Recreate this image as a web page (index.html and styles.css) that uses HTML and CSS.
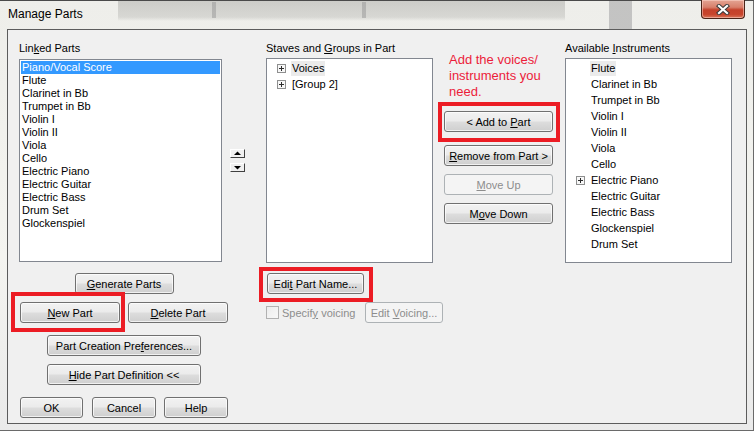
FILE: index.html
```html
<!DOCTYPE html>
<html lang="en">
<head>
  <meta charset="UTF-8" />
  <title>Manage Parts</title>
  <link rel="stylesheet" href="styles.css" />
</head>
<body>

<div class="window">
  <!-- title bar -->
  <div class="titlebar">
    <span class="title">Manage Parts</span>
    <div class="close-btn">
      <svg width="14" height="11" viewBox="0 0 14 11">
        <path d="M3 2 L11 9 M11 2 L3 9" stroke="#3a3a3a" stroke-width="4.2" stroke-linecap="square" fill="none"/>
        <path d="M3 2 L11 9 M11 2 L3 9" stroke="#ffffff" stroke-width="2.2" stroke-linecap="square" fill="none"/>
      </svg>
    </div>
  </div>

  <!-- dialog body -->
  <div class="client">

    <!-- linked parts -->
    <div class="col col-linked">
      <div class="label">Lin<u>k</u>ed Parts</div>
      <div class="list-row">
        <div class="listbox linked-list">
          <div class="list-item selected">Piano/Vocal Score</div>
          <div class="list-item">Flute</div>
          <div class="list-item">Clarinet in Bb</div>
          <div class="list-item">Trumpet in Bb</div>
          <div class="list-item">Violin I</div>
          <div class="list-item">Violin II</div>
          <div class="list-item">Viola</div>
          <div class="list-item">Cello</div>
          <div class="list-item">Electric Piano</div>
          <div class="list-item">Electric Guitar</div>
          <div class="list-item">Electric Bass</div>
          <div class="list-item">Drum Set</div>
          <div class="list-item">Glockenspiel</div>
        </div>
        <div class="spin">
          <div class="spin-btn">
            <svg width="13" height="7" viewBox="0 0 13 7"><polygon points="3,5 10,5 6.5,1.5" fill="#000"/></svg>
          </div>
          <div class="spin-btn">
            <svg width="13" height="7" viewBox="0 0 13 7"><polygon points="3,2 10,2 6.5,5.5" fill="#000"/></svg>
          </div>
        </div>
      </div>

      <div class="left-buttons">
        <button class="btn w-generate"><u>G</u>enerate Parts</button>
        <div class="btn-pair">
          <span class="marked mark-new"><button class="btn w-part"><u>N</u>ew Part</button></span>
          <button class="btn w-part"><u>D</u>elete Part</button>
        </div>
        <button class="btn w-wide gap-12">Part Creation Pre<u>f</u>erences...</button>
        <button class="btn w-wide gap-8"><u>H</u>ide Part Definition &lt;&lt;</button>
        <div class="dialog-buttons">
          <button class="btn w-ok">OK</button>
          <button class="btn w-cancel">Cancel</button>
          <button class="btn w-cancel">Help</button>
        </div>
      </div>
    </div>

    <!-- staves and groups -->
    <div class="col col-staves">
      <div class="label label-tree">Staves and <u>G</u>roups in Part</div>
      <div class="listbox treebox">
        <div class="tree-row">
          <span class="expander">
            <svg width="9" height="9" viewBox="0 0 9 9"><rect x="0.5" y="0.5" width="8" height="8" fill="#f7f7f7" stroke="#8e8f8f"/><path d="M2 4.5 H7 M4.5 2 V7" stroke="#2c2c2c"/></svg>
          </span>
          <span class="tree-text hover">Voices</span>
        </div>
        <div class="tree-row">
          <span class="expander">
            <svg width="9" height="9" viewBox="0 0 9 9"><rect x="0.5" y="0.5" width="8" height="8" fill="#f7f7f7" stroke="#8e8f8f"/><path d="M2 4.5 H7 M4.5 2 V7" stroke="#2c2c2c"/></svg>
          </span>
          <span class="tree-text">[Group 2]</span>
        </div>
      </div>

      <span class="marked mark-edit"><button class="btn w-edit">Edi<u>t</u> Part Name...</button></span>

      <div class="voicing-row">
        <span class="checkbox"></span>
        <span class="check-label">Specif<u>y</u> voicing</span>
        <button class="btn w-voicing" disabled>Edit <u>V</u>oicing...</button>
      </div>
    </div>

    <!-- add / remove -->
    <div class="col col-actions">
      <div class="hint">Add the voices/<br>instruments you<br>need.</div>
      <span class="marked mark-add"><button class="btn w-action">&lt; Add to <u>P</u>art</button></span>
      <button class="btn w-action gap-13"><u>R</u>emove from Part &gt;</button>
      <button class="btn w-action gap-8" disabled><u>M</u>ove Up</button>
      <button class="btn w-action gap-8">M<u>o</u>ve Down</button>
    </div>

    <!-- available instruments -->
    <div class="col col-avail">
      <div class="label label-tree">Available <u>I</u>nstruments</div>
      <div class="listbox treebox">
        <div class="tree-row"><span class="expander empty"></span><span class="tree-text hover">Flute</span></div>
        <div class="tree-row"><span class="expander empty"></span><span class="tree-text">Clarinet in Bb</span></div>
        <div class="tree-row"><span class="expander empty"></span><span class="tree-text">Trumpet in Bb</span></div>
        <div class="tree-row"><span class="expander empty"></span><span class="tree-text">Violin I</span></div>
        <div class="tree-row"><span class="expander empty"></span><span class="tree-text">Violin II</span></div>
        <div class="tree-row"><span class="expander empty"></span><span class="tree-text">Viola</span></div>
        <div class="tree-row"><span class="expander empty"></span><span class="tree-text">Cello</span></div>
        <div class="tree-row">
          <span class="expander">
            <svg width="9" height="9" viewBox="0 0 9 9"><rect x="0.5" y="0.5" width="8" height="8" fill="#f7f7f7" stroke="#8e8f8f"/><path d="M2 4.5 H7 M4.5 2 V7" stroke="#2c2c2c"/></svg>
          </span>
          <span class="tree-text">Electric Piano</span>
        </div>
        <div class="tree-row"><span class="expander empty"></span><span class="tree-text">Electric Guitar</span></div>
        <div class="tree-row"><span class="expander empty"></span><span class="tree-text">Electric Bass</span></div>
        <div class="tree-row"><span class="expander empty"></span><span class="tree-text">Glockenspiel</span></div>
        <div class="tree-row"><span class="expander empty"></span><span class="tree-text">Drum Set</span></div>
      </div>
    </div>

  </div>
</div>

</body>
</html>
```

FILE: styles.css
```css
* {
  margin: 0;
  padding: 0;
  box-sizing: border-box;
}

body {
  width: 754px;
  height: 431px;
  overflow: hidden;
  font-family: "Liberation Sans", Arial, sans-serif;
  font-size: 11px;
  color: #000;
  background: #eeeeea;
}

u {
  text-decoration: underline;
  text-underline-offset: 1px;
}

/* Window frame (glass with blurred windows behind) */
.window {
  width: 754px;
  height: 431px;
  display: flex;
  flex-direction: column;
  padding: 0 7px 7px;
  box-shadow: inset 0 1px #4a4a4a, inset -1px -1px #6a6a6a;
  background:
    linear-gradient(to right, rgba(150, 150, 150, 0.5), rgba(150, 150, 150, 0.5)) 212px 2px / 4px 16px no-repeat,
    linear-gradient(to right, rgba(150, 150, 150, 0.5), rgba(150, 150, 150, 0.5)) 362px 2px / 4px 16px no-repeat,
    linear-gradient(rgba(190, 190, 186, 0.7), rgba(200, 200, 196, 0.6) 80%, rgba(230, 230, 226, 0)) 118px 1px / 447px 20px no-repeat,
    linear-gradient(rgba(185, 185, 185, 0.8), rgba(185, 185, 185, 0.8)) 609px 1px / 23px 28px no-repeat,
    linear-gradient(#eeeeea, #f4f4f0 60%, #eaeaea);
}

.titlebar {
  height: 29px;
  flex-shrink: 0;
  display: flex;
  justify-content: space-between;
  align-items: flex-start;
}

.title {
  font-size: 12px;
  line-height: 14px;
  margin: 7px 0 0 1px;
  color: #000;
}

.close-btn {
  width: 44px;
  height: 19px;
  margin-right: 2px;
  display: flex;
  align-items: center;
  justify-content: center;
  border: 1px solid #4a2418;
  border-top: none;
  border-radius: 0 0 4px 4px;
  background: linear-gradient(#e4a493 0%, #d8806c 40%, #c4412a 55%, #c8452c 80%, #d9765a 100%);
  box-shadow: inset 0 0 0 1px rgba(255, 220, 210, 0.5);
}

/* Dialog body */
.client {
  flex: 1;
  display: flex;
  align-items: flex-start;
  padding: 12px 0 0 11px;
  border: 1px solid #5c5c5c;
  background: #f0f0f0;
}

.col {
  display: flex;
  flex-direction: column;
  flex-shrink: 0;
}

.label {
  line-height: 13px;
  margin-bottom: 4px;
  white-space: nowrap;
}

.label-tree {
  margin-bottom: 3px;
}

.listbox {
  background: #fff;
  border: 1px solid #828790;
}

/* Linked parts */
.col-linked {
  width: 226px;
}

.list-row {
  display: flex;
  align-items: center;
}

.linked-list {
  width: 203px;
  height: 203px;
  padding: 1px;
}

.list-item {
  height: 13px;
  line-height: 13px;
  padding-left: 1px;
  white-space: nowrap;
}

.list-item.selected {
  background: #3399ff;
  color: #fff;
}

.spin {
  margin-left: 8px;
  display: flex;
  flex-direction: column;
  gap: 5px;
}

.spin-btn {
  width: 15px;
  height: 9px;
  display: flex;
  background: #f0f0f0;
  border: 1px solid;
  border-color: #ffffff #404040 #404040 #ffffff;
}

.spin-btn svg {
  display: block;
}

.left-buttons {
  width: 208px;
  margin: 11px 0 0 1px;
  display: flex;
  flex-direction: column;
  align-items: center;
}

.btn-pair {
  display: flex;
  gap: 8px;
  margin-top: 8px;
  align-self: stretch;
}

.dialog-buttons {
  display: flex;
  margin-top: 12px;
  align-self: stretch;
  gap: 8px;
}

.dialog-buttons .w-ok {
  margin-right: 1px;
}

/* Buttons */
.btn {
  height: 21px;
  font-family: inherit;
  font-size: 11px;
  color: #000;
  border: 1px solid #707070;
  border-radius: 3px;
  background: linear-gradient(#f2f2f2 0%, #ebebeb 48%, #dddddd 52%, #cfcfcf 100%);
  box-shadow: inset 0 0 0 1px rgba(255, 255, 255, 0.7);
  white-space: nowrap;
  flex-shrink: 0;
}

.btn:disabled {
  color: #8d8d8d;
  border-color: #adb2b5;
  background: #f4f4f4;
  box-shadow: none;
}

.w-generate { width: 99px; }
.w-part     { width: 100px; }
.w-wide     { width: 154px; }
.w-ok       { width: 63px; }
.w-cancel   { width: 64px; }
.w-edit     { width: 97px; }
.w-voicing  { width: 78px; margin-left: auto; }
.w-action   { width: 109px; }

.gap-8  { margin-top: 8px; }
.gap-12 { margin-top: 12px; }
.gap-13 { margin-top: 13px; }

/* red annotation boxes */
.marked {
  position: relative;
  display: inline-flex;
  align-self: flex-start;
}

.marked::after {
  content: "";
  position: absolute;
  border: 4px solid #ec1c24;
  pointer-events: none;
}

.mark-new::after  { inset: -10px -5px -9px -9px; }
.mark-add::after  { inset: -9px -7px -10px -6px; }
.mark-edit::after { inset: -6px -9px -8px -8px; }

/* Staves and groups */
.col-staves {
  width: 167px;
  margin-left: 21px;
}

.treebox {
  width: 167px;
  height: 205px;
  padding-top: 1px;
}

.tree-row {
  height: 16px;
  display: flex;
  align-items: center;
  padding-left: 10px;
  white-space: nowrap;
}

.expander {
  width: 9px;
  height: 9px;
  margin-right: 5px;
  display: flex;
}

.expander svg {
  display: block;
}

.tree-text {
  height: 15px;
  line-height: 15px;
  padding: 0 1px;
}

.tree-text.hover {
  background: #ebebeb;
}

.mark-edit {
  margin: 10px 0 0 1px;
}

.voicing-row {
  width: 177px;
  height: 21px;
  margin-top: 8px;
  display: flex;
  align-items: center;
}

.checkbox {
  width: 13px;
  height: 13px;
  border: 1px solid #b1b1b1;
  background: linear-gradient(135deg, #ececec, #f8f8f8);
  flex-shrink: 0;
}

.check-label {
  margin-left: 3px;
  color: #8d8d8d;
  white-space: nowrap;
}

/* Add / remove column */
.col-actions {
  width: 109px;
  margin: 10px 0 0 11px;
}

.hint {
  font-size: 13px;
  line-height: 16px;
  color: #ec1c3a;
  padding-left: 5px;
  white-space: nowrap;
}

.mark-add {
  margin-top: 11px;
}

/* Available instruments */
.col-avail {
  width: 167px;
  margin-left: 12px;
}
```
